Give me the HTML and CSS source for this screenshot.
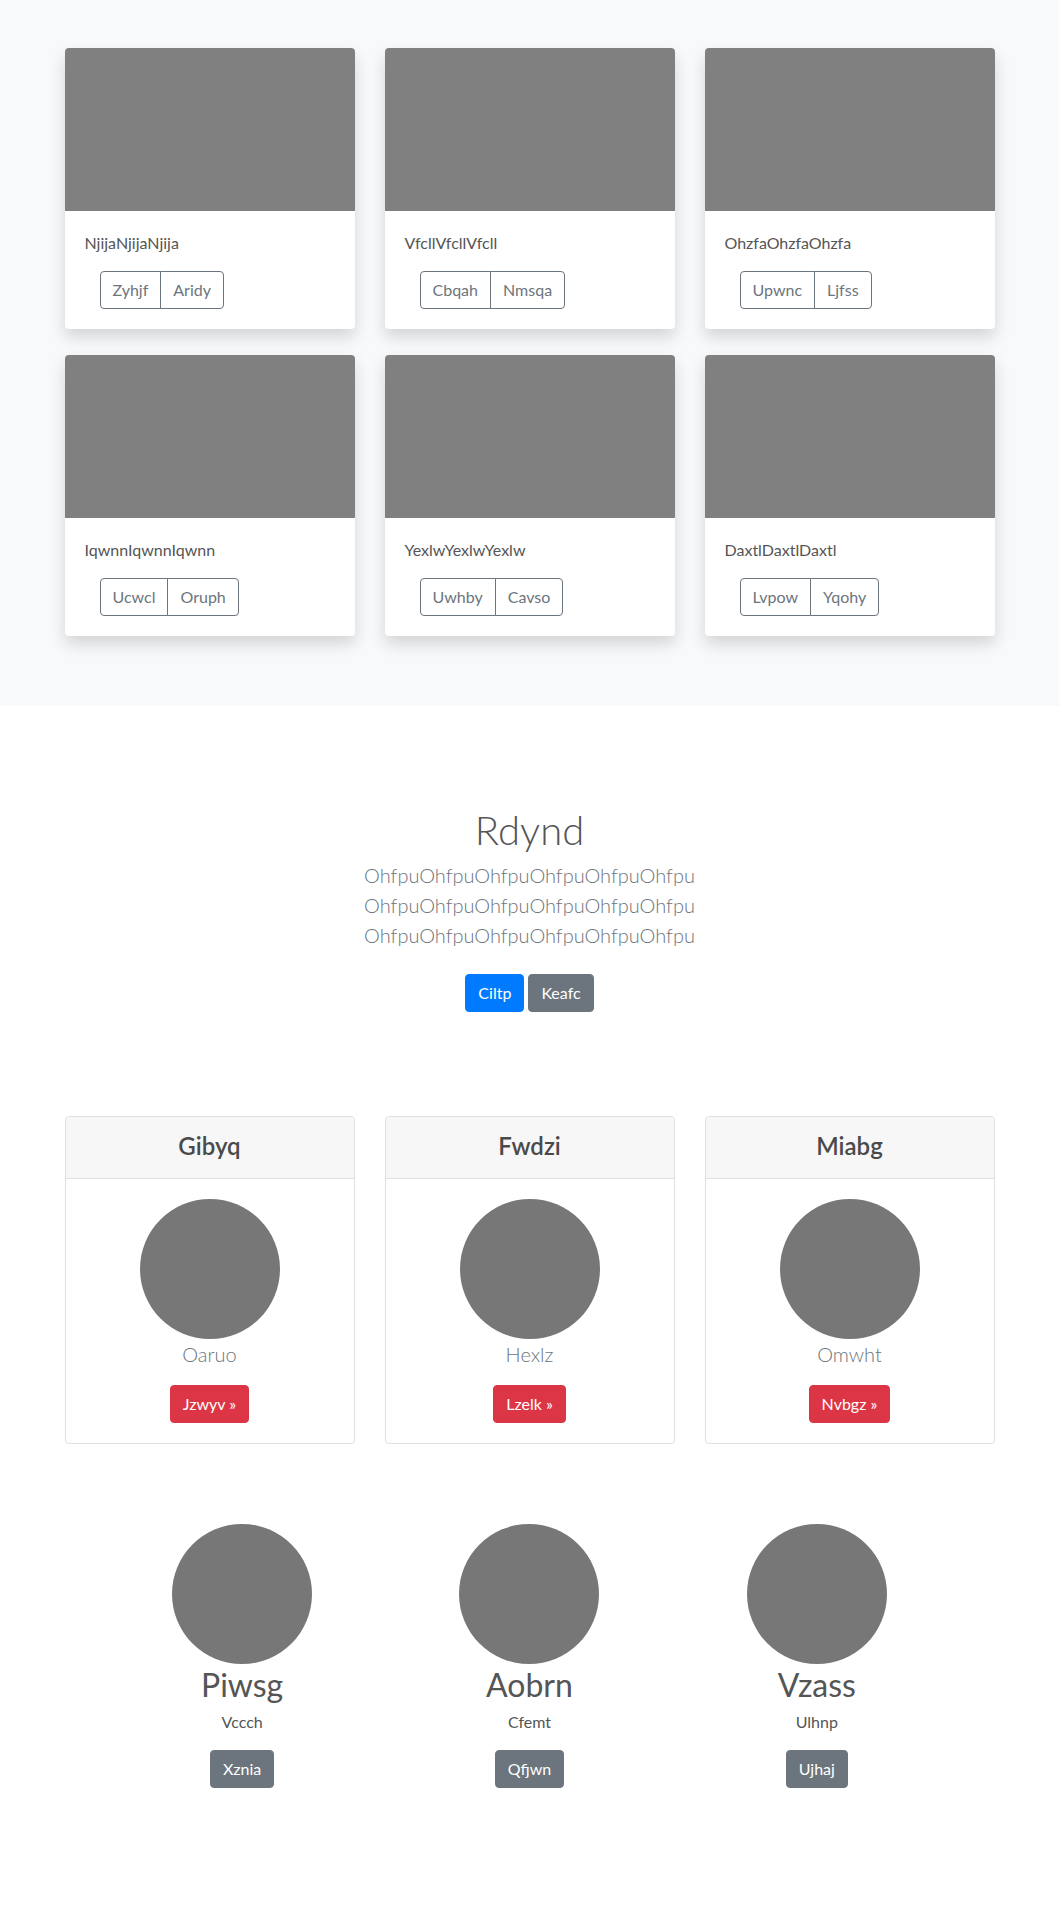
FILE: index.html
```html
<!DOCTYPE html>
<html lang="en">
<head>
<meta charset="utf-8">
<title>Page</title>
<link rel="stylesheet" href="styles.css">
</head>
<body>
<section class="album">
  <div class="album-grid">
    <div class="card">
      <div class="card-img"></div>
      <div class="card-body">
        <p class="card-text">NjijaNjijaNjija</p>
        <div class="btn-group"><button class="btn btn-outline">Zyhjf</button><button class="btn btn-outline">Aridy</button></div>
      </div>
    </div>
    <div class="card">
      <div class="card-img"></div>
      <div class="card-body">
        <p class="card-text">VfcllVfcllVfcll</p>
        <div class="btn-group"><button class="btn btn-outline">Cbqah</button><button class="btn btn-outline">Nmsqa</button></div>
      </div>
    </div>
    <div class="card">
      <div class="card-img"></div>
      <div class="card-body">
        <p class="card-text">OhzfaOhzfaOhzfa</p>
        <div class="btn-group"><button class="btn btn-outline">Upwnc</button><button class="btn btn-outline">Ljfss</button></div>
      </div>
    </div>
    <div class="card">
      <div class="card-img"></div>
      <div class="card-body">
        <p class="card-text">IqwnnIqwnnIqwnn</p>
        <div class="btn-group"><button class="btn btn-outline">Ucwcl</button><button class="btn btn-outline">Oruph</button></div>
      </div>
    </div>
    <div class="card">
      <div class="card-img"></div>
      <div class="card-body">
        <p class="card-text">YexlwYexlwYexlw</p>
        <div class="btn-group"><button class="btn btn-outline">Uwhby</button><button class="btn btn-outline">Cavso</button></div>
      </div>
    </div>
    <div class="card">
      <div class="card-img"></div>
      <div class="card-body">
        <p class="card-text">DaxtlDaxtlDaxtl</p>
        <div class="btn-group"><button class="btn btn-outline">Lvpow</button><button class="btn btn-outline">Yqohy</button></div>
      </div>
    </div>
  </div>
</section>

<section class="hero">
  <h1 class="hero-title">Rdynd</h1>
  <p class="lead">OhfpuOhfpuOhfpuOhfpuOhfpuOhfpu<br>OhfpuOhfpuOhfpuOhfpuOhfpuOhfpu<br>OhfpuOhfpuOhfpuOhfpuOhfpuOhfpu</p>
  <p class="hero-actions"><a class="btn btn-primary">Ciltp</a><a class="btn btn-secondary">Keafc</a></p>
</section>

<section class="pricing">
  <div class="pcard">
    <div class="pcard-header"><h4>Gibyq</h4></div>
    <div class="pcard-body">
      <div class="circle"></div>
      <p class="pcard-text">Oaruo</p>
      <a class="btn btn-danger">Jzwyv »</a>
    </div>
  </div>
  <div class="pcard">
    <div class="pcard-header"><h4>Fwdzi</h4></div>
    <div class="pcard-body">
      <div class="circle"></div>
      <p class="pcard-text">Hexlz</p>
      <a class="btn btn-danger">Lzelk »</a>
    </div>
  </div>
  <div class="pcard">
    <div class="pcard-header"><h4>Miabg</h4></div>
    <div class="pcard-body">
      <div class="circle"></div>
      <p class="pcard-text">Omwht</p>
      <a class="btn btn-danger">Nvbgz »</a>
    </div>
  </div>
</section>

<section class="marketing">
  <div class="mcol">
    <div class="circle"></div>
    <h2>Piwsg</h2>
    <p class="mtext">Vccch</p>
    <p class="mbtn"><a class="btn btn-secondary">Xznia</a></p>
  </div>
  <div class="mcol">
    <div class="circle"></div>
    <h2>Aobrn</h2>
    <p class="mtext">Cfemt</p>
    <p class="mbtn"><a class="btn btn-secondary">Qfjwn</a></p>
  </div>
  <div class="mcol">
    <div class="circle"></div>
    <h2>Vzass</h2>
    <p class="mtext">Ulhnp</p>
    <p class="mbtn"><a class="btn btn-secondary">Ujhaj</a></p>
  </div>
</section>
</body>
</html>
```

FILE: styles.css
```css
* { box-sizing: border-box; }

html, body {
  margin: 0;
  padding: 0;
  background: #fff;
}

body {
  font-family: "Lato", "Liberation Sans", sans-serif;
  font-size: 16px;
  line-height: 1.5;
  color: #555;
}

p { margin: 0; }
h1, h2, h4 { margin: 0; }

/* Buttons */
.btn {
  display: inline-block;
  font-family: inherit;
  font-size: 16px;
  line-height: 24px;
  padding: 6px 12px;
  border: 1px solid transparent;
  border-radius: 4px;
  text-align: center;
  text-decoration: none;
  cursor: pointer;
  background: transparent;
}

.btn-outline {
  color: #6c757d;
  border-color: #6c757d;
  background: #fff;
}

.btn-primary {
  color: #fff;
  background: #007bff;
  border-color: #007bff;
}

.btn-secondary {
  color: #fff;
  background: #6c757d;
  border-color: #6c757d;
}

.btn-danger {
  color: #fff;
  background: #dc3545;
  border-color: #dc3545;
}

.btn-group {
  display: inline-flex;
  margin-left: 15px;
}

.btn-group .btn + .btn {
  margin-left: -1px;
}

.btn-group .btn:first-child {
  border-top-right-radius: 0;
  border-bottom-right-radius: 0;
}

.btn-group .btn:last-child {
  border-top-left-radius: 0;
  border-bottom-left-radius: 0;
}

/* Album */
.album {
  background: #f8f9fa;
  padding: 48px 0 70px;
}

.album-grid {
  width: 930px;
  margin: 0 auto;
  display: grid;
  grid-template-columns: repeat(3, 290px);
  column-gap: 30px;
  row-gap: 26px;
}

.card {
  background: #fff;
  border-radius: 4px;
  overflow: hidden;
  box-shadow: 0 8px 16px rgba(0, 0, 0, 0.15);
}

.card-img {
  height: 163px;
  background: #808080;
}

.card-body {
  padding: 20px;
}

.card-text {
  margin-bottom: 16px;
  line-height: 24px;
  color: #555;
}

/* Hero */
.hero {
  text-align: center;
  padding: 100px 0 104px;
}

.hero-title {
  font-size: 40px;
  font-weight: 300;
  line-height: 48px;
  margin-bottom: 6px;
  color: #555;
}

.lead {
  font-size: 20px;
  font-weight: 300;
  line-height: 30px;
  color: #6c757d;
}

.hero-actions {
  margin-top: 24px;
  display: flex;
  justify-content: center;
  gap: 4px;
}

/* Pricing */
.pricing {
  width: 930px;
  margin: 0 auto;
  display: grid;
  grid-template-columns: repeat(3, 290px);
  column-gap: 30px;
}

.pcard {
  border: 1px solid #dfdfdf;
  border-radius: 4px;
  background: #fff;
  text-align: center;
}

.pcard-header {
  height: 62px;
  background: #f7f7f7;
  border-bottom: 1px solid #dfdfdf;
  border-radius: 3px 3px 0 0;
  display: flex;
  align-items: center;
  justify-content: center;
  padding-bottom: 4px;
}

.pcard-header h4 {
  font-size: 24px;
  font-weight: 600;
  line-height: 29px;
  color: #4a4a4a;
}

.pcard-body {
  padding: 20px;
  display: flex;
  flex-direction: column;
  align-items: center;
}

.circle {
  width: 140px;
  height: 140px;
  border-radius: 50%;
  background: #777;
}

.pcard-text {
  font-size: 20px;
  font-weight: 300;
  line-height: 30px;
  color: #6c757d;
  margin-bottom: 16px;
}

/* Marketing */
.marketing {
  width: 862px;
  margin: 80px auto 0;
  display: grid;
  grid-template-columns: repeat(3, 1fr);
}

.mcol {
  display: flex;
  flex-direction: column;
  align-items: center;
  text-align: center;
}

.mcol h2 {
  font-size: 32px;
  font-weight: 400;
  line-height: 38px;
  margin-top: 2px;
  margin-bottom: 6px;
  color: #555;
}

.mtext {
  line-height: 24px;
  margin-bottom: 16px;
  color: #555;
}
```
